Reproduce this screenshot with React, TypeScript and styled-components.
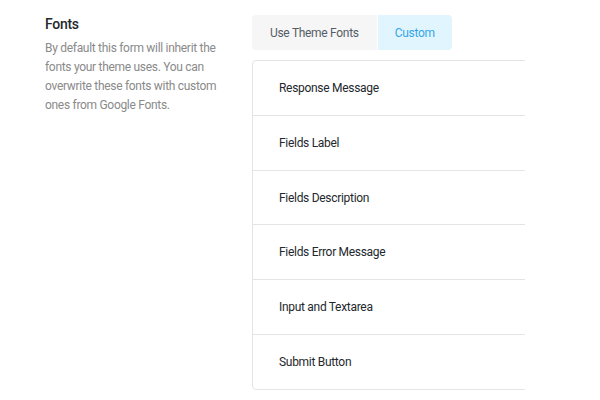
import React from "react";
import styled, { createGlobalStyle } from "styled-components";

const Global = createGlobalStyle`
  html, body { margin: 0; padding: 0; background: #ffffff; }
  body { font-family: Roboto, "Liberation Sans", Arial, sans-serif; letter-spacing: -0.3px; }
`;

const Page = styled.div`
  display: flex;
  align-items: flex-start;
  width: 600px;
  height: 400px;
  overflow: hidden;
  background: #fff;
`;

const Intro = styled.div`
  box-sizing: border-box;
  width: 252px;
  padding: 14px 0 0 45px;
`;

const Title = styled.h3`
  margin: 0;
  font-size: 14px;
  line-height: 20px;
  font-weight: 500;
  color: #23282d;
`;

const Desc = styled.p`
  width: 172px;
  margin: 5px 0 0;
  font-size: 12px;
  line-height: 19px;
  color: #8a8a8a;
`;

const Settings = styled.div`
  width: 273px;
  padding-top: 15px;
  overflow: hidden;
`;

const Tabs = styled.div`
  display: flex;
  gap: 1px;
  margin-bottom: 10px;
`;

const Tab = styled.button<{ $active?: boolean }>`
  height: 35px;
  padding: 0 ${(p) => (p.$active ? "17px" : "18px")};
  border: none;
  font-family: inherit;
  letter-spacing: inherit;
  font-size: 12px;
  background: ${(p) => (p.$active ? "#e1f5fe" : "#f6f6f6")};
  color: ${(p) => (p.$active ? "#35a5e8" : "#555d66")};
  border-radius: ${(p) => (p.$active ? "0 4px 4px 0" : "4px 0 0 4px")};
  cursor: pointer;
`;

const Panel = styled.div`
  width: 340px;
  border: 1px solid #e4e4e4;
  border-radius: 4px;
`;

const Row = styled.div`
  display: flex;
  align-items: center;
  height: 53.84px;
  padding-left: 26px;
  font-size: 12px;
  color: #23282d;
  border-bottom: 1px solid #e4e4e4;
  &:last-child { border-bottom: none; }
`;

const rows = [
  "Response Message",
  "Fields Label",
  "Fields Description",
  "Fields Error Message",
  "Input and Textarea",
  "Submit Button",
];

export default function App() {
  return (
    <>
      <Global />
      <Page>
        <Intro>
          <Title>Fonts</Title>
          <Desc>
            By default this form will inherit the fonts your theme uses. You can
            overwrite these fonts with custom ones from Google Fonts.
          </Desc>
        </Intro>
        <Settings>
          <Tabs>
            <Tab>Use Theme Fonts</Tab>
            <Tab $active>Custom</Tab>
          </Tabs>
          <Panel>
            {rows.map((r) => (
              <Row key={r}>{r}</Row>
            ))}
          </Panel>
        </Settings>
      </Page>
    </>
  );
}
